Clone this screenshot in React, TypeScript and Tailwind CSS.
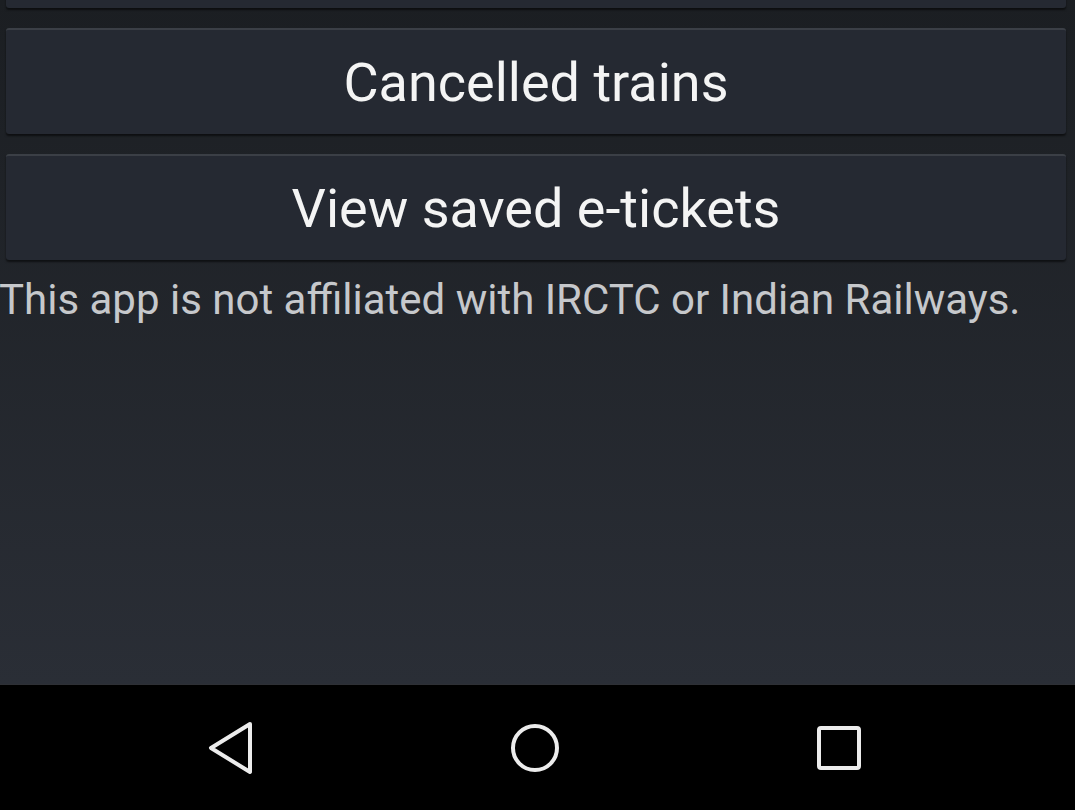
import React from "react"

const font = { fontFamily: "Roboto, 'Noto Sans', sans-serif" }

function MenuButton({ label, className = "" }: { label: string; className?: string }) {
    return (
        <button
            className={`mx-[6px] mr-[9px] flex h-[106px] items-center justify-center rounded-[3px] border-t-2 border-t-[#3b3f46] bg-[#252932] pt-[1px] text-[54px] text-[#f4f4f4] shadow-[0_2px_2px_rgba(0,0,0,0.55)] ${className}`}
        >
            {label}
        </button>
    )
}

export default function App() {
    return (
        <div className="flex h-[810px] w-[1075px] flex-col overflow-hidden" style={font}>
            {/* Scrolled content */}
            <main className="flex flex-1 flex-col gap-[20px] overflow-hidden bg-gradient-to-b from-[#1b1e22] to-[#2a2e36]">
                <MenuButton label="" className="-mt-[98px]" />
                <MenuButton label="Cancelled trains" />
                <MenuButton label="View saved e-tickets" />
                <p className="-ml-[1px] -mt-[4px] whitespace-nowrap text-[42px] leading-[48px] text-[#c6c8cb]">
                    This app is not affiliated with IRCTC or Indian Railways.
                </p>
            </main>

            {/* Navigation bar */}
            <nav className="flex h-[126px] items-center justify-center border-t border-t-[#2e3035] bg-black pr-[5px]">
                <div className="flex w-[304px] justify-center">
                    <svg width="48" height="56" viewBox="0 0 48 56" fill="none" stroke="#ececec" strokeWidth="4" strokeLinejoin="round" strokeLinecap="round">
                        <path d="M43 4 L4 28 L43 52 Z" />
                    </svg>
                </div>
                <div className="flex w-[304px] justify-center">
                    <svg width="52" height="52" viewBox="0 0 52 52" fill="none" stroke="#ececec" strokeWidth="4">
                        <circle cx="26" cy="26" r="22" />
                    </svg>
                </div>
                <div className="flex w-[304px] justify-center">
                    <svg width="46" height="46" viewBox="0 0 46 46" fill="none" stroke="#ececec" strokeWidth="4">
                        <rect x="3" y="3" width="40" height="40" rx="2" />
                    </svg>
                </div>
            </nav>
        </div>
    )
}
